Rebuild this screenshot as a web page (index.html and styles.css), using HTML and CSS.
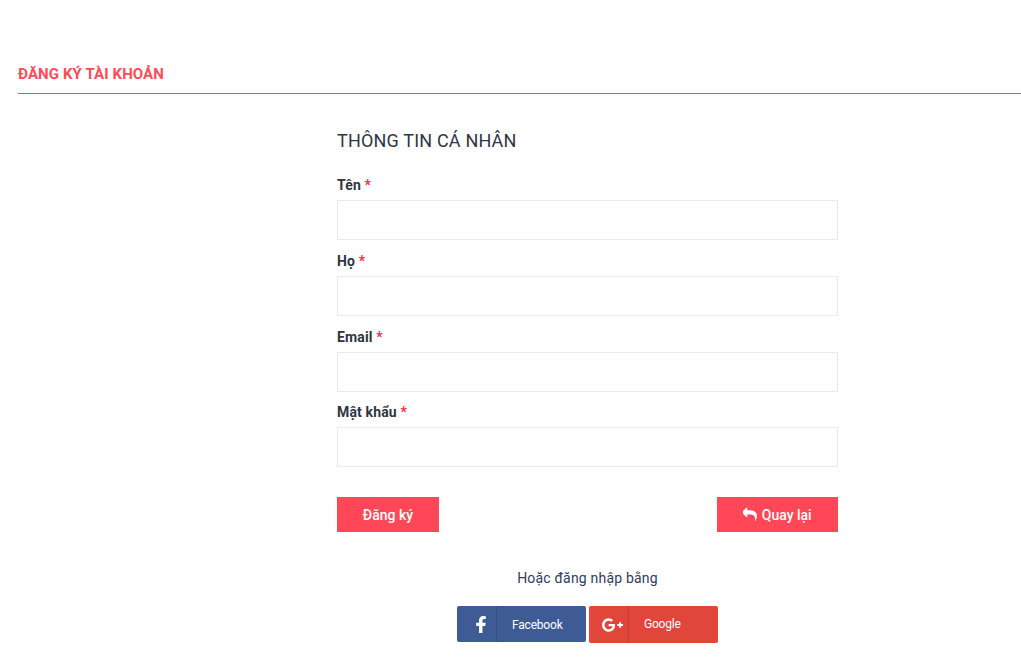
FILE: index.html
```html
<!DOCTYPE html>
<html lang="vi">
<head>
  <meta charset="UTF-8">
  <title>Đăng ký tài khoản</title>
  <link rel="stylesheet" href="styles.css">
</head>
<body>
  <div class="page-title">
    <h1>ĐĂNG KÝ TÀI KHOẢN</h1>
  </div>

  <form class="register-form">
    <h2>THÔNG TIN CÁ NHÂN</h2>

    <div class="field">
      <label for="first-name">Tên <span class="required">*</span></label>
      <input id="first-name" type="text">
    </div>
    <div class="field">
      <label for="last-name">Họ <span class="required">*</span></label>
      <input id="last-name" type="text">
    </div>
    <div class="field">
      <label for="email">Email <span class="required">*</span></label>
      <input id="email" type="text">
    </div>
    <div class="field field-last">
      <label for="password">Mật khẩu <span class="required">*</span></label>
      <input id="password" type="password">
    </div>

    <div class="actions">
      <button class="btn btn-register" type="button">Đăng ký</button>
      <button class="btn btn-back" type="button">
        <svg class="back-icon" viewBox="0 0 1792 1792"><path fill="currentColor" d="M1664 1120q0 166-127 451-3 7-10.500 24t-13.500 30-13 22q-12 17-28 17-15 0-23.500-10t-8.500-25q0-9 2.500-26.500t2.500-23.500q5-68 5-123 0-101-17.500-181t-48.500-138.500-80-101-105.500-69.500-133-42.500-154-21.500-175.500-6h-224v256q0 26-19 45t-45 19-45-19l-512-512q-19-19-19-45t19-45l512-512q19-19 45-19t45 19 19 45v256h224q713 0 875 403 53 134 53 333z"/></svg>
        Quay lại
      </button>
    </div>

    <p class="social-title">Hoặc đăng nhập bằng</p>

    <div class="social">
      <a class="social-btn facebook" href="#">
        <span class="social-icon">
          <svg class="fb-icon" viewBox="95 0 864 1536"><path fill="currentColor" d="M959 12v264h-157q-86 0-116 36t-30 108v189h293l-39 296h-254v759h-306v-759h-255v-296h255v-218q0-186 104-288.500t277-102.500q147 0 228 12z"/></svg>
        </span>
        <span class="social-name">Facebook</span>
      </a>
      <a class="social-btn google" href="#">
        <span class="social-icon">
          <svg class="g-icon" viewBox="0 128 2304 1536"><path fill="currentColor" d="M1437 913q0 208-87 370.500t-248 254-369 91.500q-149 0-285-58t-234-156-156-234-58-285 58-285 156-234 234-156 285-58q286 0 491 192l-199 191q-117-113-292-113-123 0-227.500 62t-165.500 168.500-61 232.500 61 232.500 165.500 168.500 227.500 62q83 0 152.500-23t114.500-57.500 78.500-78.500 49-83 21.500-74h-416v-252h692q12 63 12 122zm867-122v210h-209v209h-210v-209h-209v-210h209v-209h210v209h209z"/></svg>
        </span>
        <span class="social-name">Google</span>
      </a>
    </div>
  </form>
</body>
</html>
```

FILE: styles.css
```css
* {
  box-sizing: border-box;
}
body {
  margin: 0;
  font-family: Roboto, "Liberation Sans", sans-serif;
  font-size: 14px;
  color: #333;
  background: white;
}
.page-title {
  margin: 64px 0 0 18px;
  border-bottom: 1px solid #f04b55;
}
.page-title h1 {
  margin: 0;
  height: 29px;
  font-size: 15px;
  line-height: 20px;
  font-weight: 700;
  letter-spacing: 0.1px;
  color: #ff4a57;
}
.register-form {
  width: 501px;
  margin: 36px 0 0 337px;
}
.register-form h2 {
  margin: 0 0 27.4px;
  font-size: 18px;
  line-height: 21px;
  font-weight: 400;
  letter-spacing: 0.18px;
  color: #2f3542;
}
.field {
  margin-bottom: 13.6px;
}
.field-last {
  margin-bottom: 30px;
}
.field label {
  display: block;
  height: 22px;
  line-height: 15px;
  font-weight: 700;
  letter-spacing: 0.15px;
  color: #2f3542;
}
.required {
  color: #ff2a4d;
}
.field input {
  display: block;
  width: 100%;
  height: 40px;
  border: 1px solid #eaeaea;
  background: white;
  outline: none;
}
.actions {
  display: flex;
  justify-content: space-between;
}
.btn {
  height: 35px;
  border: 0;
  padding: 0;
  font-family: inherit;
  font-size: 14px;
  font-weight: 500;
  color: white;
  background: #ff4757;
}
.btn-register {
  width: 102px;
}
.btn-back {
  width: 121px;
}
.back-icon {
  width: 15px;
  height: 15px;
  vertical-align: -2px;
}
.social-title {
  margin: 38px 0 0;
  line-height: 16px;
  text-align: center;
  letter-spacing: 0.2px;
  color: #2f3a5c;
}
.social {
  display: flex;
  justify-content: center;
  gap: 3px;
  margin-top: 20px;
}
.social-btn {
  display: flex;
  align-items: center;
  width: 129px;
  height: 36px;
  border-radius: 2px;
  font-size: 12px;
  letter-spacing: -0.2px;
  color: white;
  text-decoration: none;
}
.facebook {
  background: #3e5b96;
}
.google {
  height: 37px;
  background: #e0473a;
}
.social-icon {
  display: flex;
  align-items: center;
  justify-content: center;
  width: 40px;
  height: 100%;
  padding-left: 7px;
  border-right: 1px solid rgba(0,0,0,0.12);
}
.facebook .social-icon {
  padding-left: 8px;
}
.fb-icon {
  width: 10px;
  height: 17px;
}
.g-icon {
  width: 21px;
  height: 14px;
}
.social-name {
  margin-left: 15px;
}
.facebook .social-name {
  padding-top: 1px;
}
.google .social-name {
  padding-bottom: 1px;
}
```
